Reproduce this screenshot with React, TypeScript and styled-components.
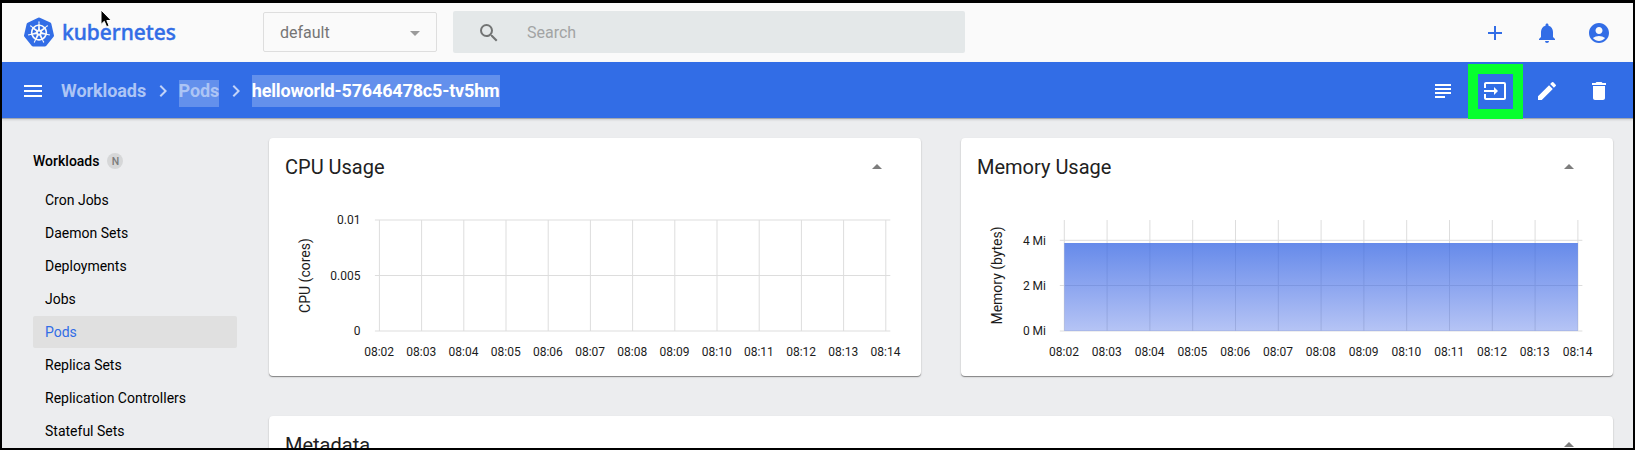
import React from "react";
import styled, { createGlobalStyle } from "styled-components";
import {
  MdAdd, MdNotifications, MdAccountCircle, MdMenu, MdChevronRight, MdSubject,
  MdInput, MdEdit, MdDelete, MdSearch, MdArrowDropDown, MdArrowDropUp,
} from "react-icons/md";
import { SiKubernetes } from "react-icons/si";

const GlobalStyle = createGlobalStyle`
  * { box-sizing: border-box; }
  body { margin: 0; overflow: hidden; font-family: Roboto, sans-serif; }
  svg { display: block; flex: none; }
`;

const BLUE = "#326de6";

const Frame = styled.div`
  width: 1635px;
  height: 450px;
  border: solid #000;
  border-width: 3px 2px 2px;
  background: #ecedef;
  display: flex;
  flex-direction: column;
  overflow: hidden;
  position: relative;
`;

const TopBar = styled.header`
  height: 59px;
  flex: none;
  display: flex;
  align-items: center;
  background: #fafafa;
  padding: 0 22px 1px 22px;
`;

const Brand = styled.div`
  width: 239px;
  display: flex;
  align-items: center;
  gap: 8px;
  color: ${BLUE};
`;

const BrandName = styled.svg`
  font: 500 21px "Noto Sans", sans-serif;
  fill: ${BLUE};
  stroke: ${BLUE};
  stroke-width: 0.4px;
  overflow: visible;
`;

const Select = styled.div`
  width: 174px;
  height: 40px;
  border: 1px solid #dedede;
  border-radius: 2px;
  margin-right: 16px;
  padding: 1px 9px 0 16px;
  display: flex;
  align-items: center;
  justify-content: space-between;
  font-size: 16px;
  color: #757575;
  svg { color: #9a9a9a; }
`;

const SearchBox = styled.div`
  width: 512px;
  height: 42px;
  border-radius: 2px;
  background: #e4e8e9;
  display: flex;
  align-items: center;
  gap: 26px;
  padding: 1px 0 0 24px;
  font-size: 16px;
  color: #a2a4a4;
  svg { color: #727474; }
`;

const Actions = styled.div<{ $color: string; $drop?: number }>`
  margin-left: auto;
  padding-top: ${(p) => p.$drop ?? 0}px;
  display: flex;
  gap: 28px;
  color: ${(p) => p.$color};
`;

const ActionBar = styled.nav`
  height: 57px;
  flex: none;
  display: flex;
  align-items: center;
  background: ${BLUE};
  color: #fff;
  padding: 1px 22px 0 19px;
  border-bottom: 1px solid #a5a8ae;
  box-shadow: 0 1px 2px rgba(0, 0, 0, 0.12);
`;

const MenuIcon = styled(MdMenu)`
  margin-right: 16px;
`;

const Crumb = styled.span<{ $faded?: boolean; $marked?: number }>`
  height: ${(p) => p.$marked ?? 27}px;
  display: flex;
  align-items: flex-end;
  align-self: flex-end;
  margin-bottom: 11px;
  line-height: 32px;
  font-size: 18px;
  font-weight: 700;
  letter-spacing: ${(p) => (p.$faded ? "-0.08px" : "-0.16px")};
  color: ${(p) => (p.$faded ? "#adc5f5" : "#fff")};
  background: ${(p) => (p.$marked ? "rgba(255,255,255,0.24)" : "transparent")};
`;

const Separator = styled(MdChevronRight)`
  color: #c2d3f8;
  margin: 0 4px 0 4.5px;
`;

const MarkedAction = styled.span`
  position: relative;
  &::after {
    content: "";
    position: absolute;
    inset: -15px -16px -16px -15px;
    border: 10px solid #06ff2e;
    z-index: 2;
  }
`;

const Main = styled.div`
  flex: 1;
  min-height: 0;
  display: flex;
`;

const Sidebar = styled.aside`
  width: 267px;
  flex: none;
  padding: 26px 32px 0 31px;
  font-size: 14px;
  color: #000;
`;

const SideTitle = styled.div`
  height: 32px;
  display: flex;
  align-items: center;
  gap: 8px;
  font-weight: 500;
  margin-bottom: 7px;
`;

const Badge = styled.span`
  width: 16px;
  height: 16px;
  border-radius: 50%;
  background: #d6d7d8;
  color: #7c7c7c;
  font-size: 10.5px;
  font-weight: 500;
  line-height: 17px;
  text-align: center;
`;

const SideItem = styled.div<{ $active?: boolean }>`
  height: 32px;
  line-height: 32px;
  margin-bottom: 1px;
  padding-left: 12px;
  border-radius: 2px;
  white-space: nowrap;
  color: ${(p) => (p.$active ? BLUE : "#000")};
  background: ${(p) => (p.$active ? "#e0e0e0" : "transparent")};
`;

const Content = styled.main`
  width: 1344px;
  padding-top: 19px;
  display: flex;
  flex-direction: column;
  gap: 40px;
`;

const CardRow = styled.div`
  display: flex;
  gap: 40px;
`;

const Card = styled.section`
  flex: 1;
  height: 238px;
  flex-shrink: 0;
  border-radius: 4px;
  background: #fff;
  box-shadow: 0 1px 1px rgba(0, 0, 0, 0.42), 0 1px 3px rgba(0, 0, 0, 0.08);
`;

const FullCard = styled(Card)`
  flex: none;
`;

const CardHeader = styled.div`
  height: 56px;
  padding: 1px 32px 0 16px;
  display: flex;
  align-items: center;
  justify-content: space-between;
  font-size: 20px;
  color: #212121;
  svg { color: #7d7d7d; }
`;

const Plot = styled.svg`
  font-family: Roboto, sans-serif;
  font-size: 12px;
  fill: #1c1c1c;
  line { stroke: #ddd; stroke-width: 1; }
`;

const Pointer = styled.svg`
  position: absolute;
  left: 95px;
  top: 5px;
`;

const TIMES = Array.from({ length: 13 }, (_, i) => "08:" + String(i + 2).padStart(2, "0"));

type ChartProps = {
  title: string;
  titleX: number;
  x: number;
  step: number;
  ticks: { y: number; label: string }[];
  labelX: number;
  area?: boolean;
};

function Chart({ title, titleX, x, step, ticks, labelX, area }: ChartProps) {
  const end = x + step * 12;
  return (
    <Plot width="652" height="182" viewBox="0 0 652 182">
      <defs>
        <linearGradient id="usage" x1="0" y1="0" x2="0" y2="1">
          <stop offset="0" stopColor="#3364e3" stopOpacity="0.75" />
          <stop offset="1" stopColor="#325be3" stopOpacity="0.36" />
        </linearGradient>
      </defs>
      {TIMES.map((t, i) => (
        <g key={t}>
          <line x1={x + step * i} x2={x + step * i} y1="26" y2="137" />
          <text x={x + step * i - 0.3} y="162.3" textAnchor="middle">{t}</text>
        </g>
      ))}
      {ticks.map((t) => (
        <g key={t.label}>
          <line x1={x - 4.5} x2={end + 4.5} y1={t.y} y2={t.y} />
          <text x={labelX} y={t.y + 4.3} textAnchor="end">{t.label}</text>
        </g>
      ))}
      {area && <rect x={x} y="49" width={step * 12} height="88" fill="url(#usage)" />}
      <text transform={`translate(${titleX} 81.5) rotate(-90)`} textAnchor="middle" fontSize="14">
        {title}
      </text>
    </Plot>
  );
}

const ITEMS = ["Cron Jobs", "Daemon Sets", "Deployments", "Jobs", "Pods", "Replica Sets",
  "Replication Controllers", "Stateful Sets"];

export default function App() {
  return (
    <Frame>
      <GlobalStyle />
      <TopBar>
        <Brand>
          <SiKubernetes size={30} />
          <BrandName width="116" height="32">
            <text x="0" y="24" textLength="114" lengthAdjust="spacingAndGlyphs">kubernetes</text>
          </BrandName>
        </Brand>
        <Select>default<MdArrowDropDown size={24} /></Select>
        <SearchBox><MdSearch size={24} />Search</SearchBox>
        <Actions $color={BLUE} $drop={2}>
          <MdAdd size={24} />
          <MdNotifications size={24} />
          <MdAccountCircle size={24} />
        </Actions>
      </TopBar>
      <ActionBar>
        <MenuIcon size={24} />
        <Crumb $faded>Workloads</Crumb>
        <Separator size={24} />
        <Crumb $faded $marked={27}>Pods</Crumb>
        <Separator size={24} />
        <Crumb $marked={32}>helloworld-57646478c5-tv5hm</Crumb>
        <Actions $color="#fff">
          <MdSubject size={24} />
          <MarkedAction><MdInput size={24} /></MarkedAction>
          <MdEdit size={24} />
          <MdDelete size={24} />
        </Actions>
      </ActionBar>
      <Main>
        <Sidebar>
          <SideTitle>Workloads<Badge>N</Badge></SideTitle>
          {ITEMS.map((item) => (
            <SideItem key={item} $active={item === "Pods"}>{item}</SideItem>
          ))}
        </Sidebar>
        <Content>
          <CardRow>
            <Card>
              <CardHeader>CPU Usage<MdArrowDropUp size={24} /></CardHeader>
              <Chart
                title="CPU (cores)" titleX={41.4} x={110.4} step={42.2} labelX={91.5}
                ticks={[{ y: 26, label: "0.01" }, { y: 81.5, label: "0.005" }, { y: 137, label: "0" }]}
              />
            </Card>
            <Card>
              <CardHeader>Memory Usage<MdArrowDropUp size={24} /></CardHeader>
              <Chart
                title="Memory (bytes)" titleX={41.4} x={103.3} step={42.8} labelX={85} area
                ticks={[{ y: 46.3, label: "4 Mi" }, { y: 91.5, label: "2 Mi" }, { y: 137, label: "0 Mi" }]}
              />
            </Card>
          </CardRow>
          <FullCard>
            <CardHeader>Metadata<MdArrowDropUp size={24} /></CardHeader>
          </FullCard>
        </Content>
      </Main>
      <Pointer width="16" height="22" viewBox="0 0 16 22">
        <path d="M4 2v14.4l3.3-3.1 2.3 5.4 2.5-1-2.3-5.2h4.5z" fill="#000" stroke="#fff" strokeWidth="1" />
      </Pointer>
    </Frame>
  );
}
